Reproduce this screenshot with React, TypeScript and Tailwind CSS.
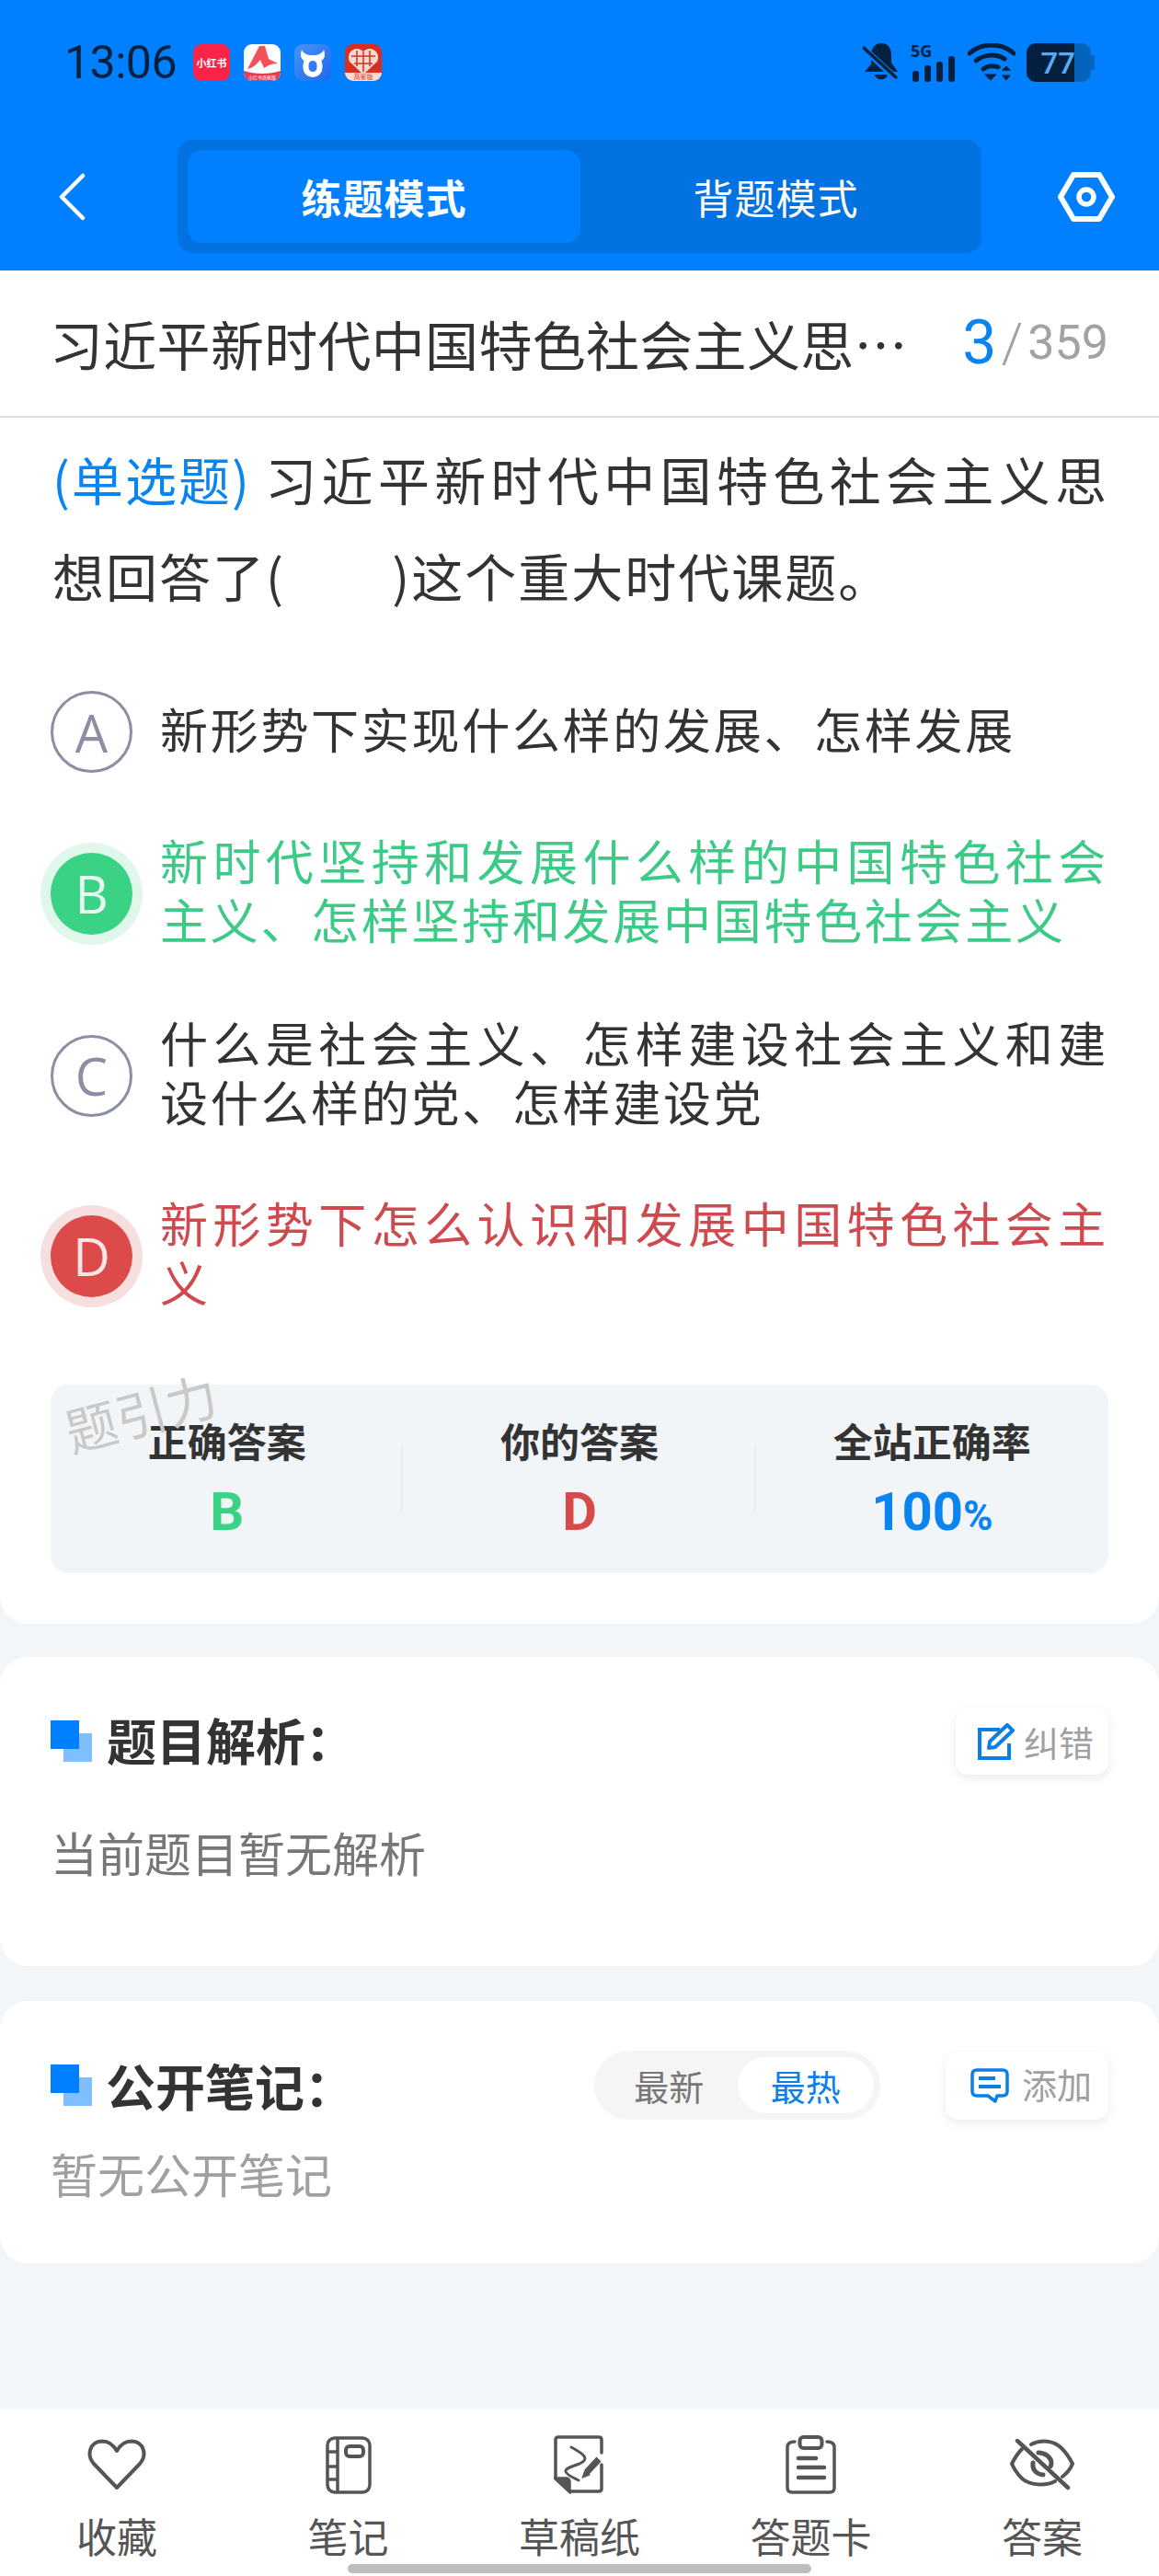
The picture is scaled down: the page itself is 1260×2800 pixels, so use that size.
const cjk = "font-['Noto_Sans_CJK_SC','Noto_Sans',sans-serif]";

function SectionMark() {
  return (
    <div className="relative w-[45px] h-[45px] shrink-0">
      <div className="absolute left-[14px] top-[14px] w-[31px] h-[31px] bg-[#80bfff]" />
      <div className="absolute left-0 top-0 w-[31px] h-[31px] bg-[#0080ff]" />
    </div>
  );
}

function Option(props: { letter: string; text: string; state?: "right" | "wrong" }) {
  let circle = "border-[3px] border-[#8c8fa3] text-[#8c8fa3]";
  let color = "text-[#333333]";
  if (props.state === "right") {
    circle = "bg-[#3ad386] text-[#e6f9ef] shadow-[0_0_0_11px_#e0f7eb]";
    color = "text-[#3ccb86]";
  }
  if (props.state === "wrong") {
    circle = "bg-[#dc4a4a] text-[#fbe6e6] shadow-[0_0_0_11px_#f8dfdf]";
    color = "text-[#cf4a4e]";
  }
  return (
    <div className="flex items-center pl-[55px] pr-[55px]">
      <div
        className={
          "w-[89px] h-[89px] rounded-full shrink-0 flex items-center justify-center text-[56px] font-['Open_Sans',sans-serif] " +
          circle
        }
      >
        {props.letter}
      </div>
      <div className={"ml-[30px] flex-1 pb-[8px] text-[52px] leading-[64px] tracking-[2.7px] text-justify " + color}>{props.text}</div>
    </div>
  );
}

function StatColumn(props: { label: string; children: React.ReactNode; border?: boolean }) {
  return (
    <div className="flex-1 relative flex flex-col items-center pt-[30px]">
      <div className="text-[43px] leading-[60px] font-bold text-[#333333]">{props.label}</div>
      <div className="mt-[13px]">{props.children}</div>
      {props.border && <div className="absolute right-0 top-[65px] w-[2px] h-[75px] bg-[#ebeef1]" />}
    </div>
  );
}

function TabItem(props: { label: string; icon: React.ReactNode }) {
  return (
    <div className="flex flex-col items-center w-[160px]">
      <div className="h-[66px] flex items-center justify-center">{props.icon}</div>
      <div className="mt-[18px] text-[44px] leading-[52px] text-[#555555]">{props.label}</div>
    </div>
  );
}

export default function App() {
  return (
    <div className={"relative w-[1260px] h-[2800px] bg-[#f2f6f9] flex flex-col overflow-hidden " + cjk}>
      {/* blue header */}
      <div className="h-[294px] bg-[#0080ff] shrink-0 flex flex-col">
        <div className="h-[152px] px-[70px] pt-[42px] flex justify-between">
          <div className="flex items-start">
            <span className="w-[122px] text-[50px] leading-[52px] font-['Roboto',sans-serif] text-[#04203f] tracking-[-0.5px]">13:06</span>
            <div className="flex gap-[15px] ml-[18px] mt-[6px]">
              <div className="w-[40px] h-[40px] rounded-[9px] bg-[#fb2448] flex items-center justify-center text-[11px] font-bold text-white whitespace-nowrap">小红书</div>
              <div className="relative w-[40px] h-[40px] rounded-[9px] bg-white overflow-hidden">
                <svg width="40" height="40" viewBox="0 0 40 40">
                  <path d="M17 2 H23 L27 16 L37 21 C30 21 25 24 22 26 L18 17 C14 22 10 26 4 27 Z" fill="#f4515c" />
                  <path d="M0 29 C12 33 28 33 40 29 V40 H0 Z" fill="#e83a50" />
                </svg>
                <span className="absolute left-0 right-0 bottom-[1px] text-center text-[5px] leading-[7px] text-white whitespace-nowrap">小红书商家版</span>
              </div>
              <div className="w-[40px] h-[40px] rounded-[9px] bg-linear-to-br from-[#4a94f5] to-[#1f66ee]">
                <svg width="40" height="40" viewBox="0 0 40 40" fill="none" stroke="white">
                  <path d="M8 6 C10 10 13 12 20 12 C27 12 30 10 32 6 C34 12 33 16 29 18 H11 C7 16 6 12 8 6 Z" fill="white" strokeWidth="0" />
                  <rect x="12.5" y="15" width="15" height="18" rx="7.5" strokeWidth="6" />
                </svg>
              </div>
              <div className="relative w-[40px] h-[40px] rounded-[9px] bg-[#d92e1e] overflow-hidden">
                <svg width="40" height="40" viewBox="0 0 40 40">
                  <path d="M20 33 L5 19 C0 9 12 0 20 8 C28 0 40 9 35 19 Z" fill="#f9d9cf" />
                  <path d="M7 13 H33 M10 21 H30 M20 8 V30 M13 7 V24 M27 7 V24" stroke="#d92e1e" strokeWidth="1.5" />
                </svg>
                <span className="absolute left-0 right-0 bottom-0 h-[9px] bg-[#fbdcd2] text-center text-[7px] leading-[9px] text-[#c9402c]">商家版</span>
              </div>
            </div>
          </div>
          <div className="flex items-start gap-[12px] mt-[5px]">
            <svg width="40" height="41" viewBox="0 0 40 41" fill="#04203f">
              <path d="M20 0 C28 0 31 6 31 13 V21 L38 31 H2 L9 23 V13 C9 6 13 0 20 0 Z" />
              <path d="M13 34 H27 C26 41 14 41 13 34 Z" />
              <path d="M0 5 L37 39" stroke="#0080ff" strokeWidth="7" />
              <path d="M0 4 L37 38" stroke="#04203f" strokeWidth="3.5" />
            </svg>
            <div className="relative w-[50px] h-[42px]">
              <span className="absolute left-0 -top-[3px] text-[18px] leading-[22px] font-bold text-[#04203f] font-['Open_Sans',sans-serif]">5G</span>
              <div className="absolute bottom-0 left-[2px] flex items-end gap-[6px]">
                <div className="w-[7px] h-[12px] rounded-[3px] bg-[#04203f]" />
                <div className="w-[7px] h-[18px] rounded-[3px] bg-[#04203f]" />
                <div className="w-[7px] h-[22px] rounded-[3px] bg-[#04203f]" />
                <div className="w-[7px] h-[28px] rounded-[3px] bg-[#04203f]" />
              </div>
            </div>
            <svg width="52" height="42" viewBox="0 0 52 42" fill="none" stroke="#04203f" strokeLinecap="round" strokeWidth="5">
              <path d="M2 11 C15 -1 37 -1 50 11" />
              <path d="M9 19 C18 12 31 11 40 17" />
              <path d="M17 28 C22 24 29 24 33 26" />
              <path d="M19 34 L31 34 L25 40 Z" fill="#04203f" strokeWidth="1" />
              <path d="M38 29 L42 25 L46 29 Z M38 35 L46 35 L42 40 Z" fill="#04203f" strokeWidth="1" />
            </svg>
            <div className="flex items-center">
              <div className="relative w-[70px] h-[42px] rounded-[10px] bg-[#0463bd]">
                <div className="absolute left-0 top-0 bottom-0 w-[52px] rounded-l-[10px] bg-[#04203f]" />
                <span className="absolute right-[17px] top-0 text-[33px] leading-[42px] font-semibold text-[#5aa9f3] font-['Open_Sans',sans-serif]">77</span>
              </div>
              <div className="w-[4px] h-[16px] rounded-r-[3px] bg-[#0463bd]" />
            </div>
          </div>
        </div>
        <div className="flex items-center pl-[64px] h-[123px]">
          <svg className="shrink-0" width="30" height="52" viewBox="0 0 30 52" fill="none" stroke="white" strokeWidth="4.5" strokeLinecap="round" strokeLinejoin="round">
            <path d="M26 3 L3 26 L26 49" />
          </svg>
          <div className="ml-[99px] w-[874px] h-[123px] shrink-0 rounded-[16px] bg-[#0272e1] p-[11px] flex">
            <div className="w-[427px] h-[101px] rounded-[16px] bg-[#0080ff] flex items-center justify-center text-[44px] font-bold text-white tracking-[1px]">练题模式</div>
            <div className="flex-1 flex items-center justify-center text-[44px] text-white tracking-[1px]">背题模式</div>
          </div>
          <svg className="ml-[83px] shrink-0" width="62" height="54" viewBox="0 0 62 54" fill="none" stroke="white" strokeWidth="6" strokeLinejoin="round">
            <path d="M17 3 H45 L59 27 L45 51 H17 L3 27 Z" />
            <circle cx="31" cy="27" r="8" strokeWidth="5.5" />
          </svg>
        </div>
      </div>

      {/* question card */}
      <div className="bg-white rounded-b-[30px] h-[1471px] shrink-0">
        <div className="h-[160px] border-b-2 border-[#dfdfdf] flex items-center pl-[54px] pr-[55px]">
          <span className="text-[58px] leading-[80px] tracking-[0.3px] text-[#333333] whitespace-nowrap">习近平新时代中国特色社会主义思…</span>
          <span className="ml-auto text-[66px] leading-[80px] text-[#0a84f0] font-['Roboto',sans-serif]">3</span>
          <span className="ml-[5px] text-[60px] leading-[80px] text-[#a2a2a2] font-['Roboto',sans-serif] font-light">/</span>
          <span className="ml-[5px] text-[52px] leading-[80px] text-[#a2a2a2] font-['Roboto',sans-serif]">359</span>
        </div>
        <div className="pl-[57px] pr-[55px] pt-[13px] text-[56px] leading-[105px] tracking-[2px] text-justify text-[#333333]">
          <span className="inline-block mr-[12px] text-[#0a84f0]">(单选题)</span>习近平新时代中国特色社会主义思想回答了(&nbsp;&nbsp;&nbsp;&nbsp;&nbsp;&nbsp;&nbsp;&nbsp;)这个重大时代课题。
        </div>
        <div className="mt-[74px] flex flex-col gap-[60px]">
          <Option letter="A" text="新形势下实现什么样的发展、怎样发展" />
          <div className="mt-[3px]">
            <Option letter="B" text="新时代坚持和发展什么样的中国特色社会主义、怎样坚持和发展中国特色社会主义" state="right" />
          </div>
          <div className="mt-[2px]">
            <Option letter="C" text="什么是社会主义、怎样建设社会主义和建设什么样的党、怎样建设党" />
          </div>
          <Option letter="D" text="新形势下怎么认识和发展中国特色社会主义" state="wrong" />
        </div>
        <div className="relative mt-[72px] mx-[55px] h-[205px] rounded-[20px] bg-[#f1f5f8] flex">
          <StatColumn label="正确答案" border>
            <span className="text-[58px] leading-[70px] font-bold text-[#3ad386] font-['Roboto',sans-serif]">B</span>
          </StatColumn>
          <StatColumn label="你的答案" border>
            <span className="text-[58px] leading-[70px] font-bold text-[#d64a4a] font-['Roboto',sans-serif]">D</span>
          </StatColumn>
          <StatColumn label="全站正确率">
            <span className="text-[58px] leading-[70px] font-bold text-[#0a84f0] font-['Roboto',sans-serif]">
              100<span className="text-[44px]">%</span>
            </span>
          </StatColumn>
          <div className="absolute left-[14px] -top-[6px] -rotate-[15deg] text-[56px] leading-[70px] text-[#c9c9c9]">题引力</div>
        </div>
      </div>

      {/* analysis */}
      <div className="mt-[36px] bg-white rounded-[30px] h-[336px] shrink-0 px-[55px]">
        <div className="flex items-center justify-between pt-[55px]">
          <div className="flex items-center">
            <SectionMark />
            <span className="ml-[16px] -mt-[3px] text-[54px] leading-[70px] font-bold text-[#333333]">题目解析：</span>
          </div>
          <div className="w-[166px] h-[73px] rounded-[14px] bg-white shadow-[0_4px_12px_rgba(0,0,0,0.08)] flex items-center justify-end pr-[16px]">
            <svg width="41" height="40" viewBox="0 0 41 40" fill="none" stroke="#0a7fe8" strokeWidth="4">
              <path d="M24 7 H2 V38 H34 V22" />
              <path d="M12 27 L13 20 L32 2 L38 8 L19 26 Z" strokeLinejoin="round" />
            </svg>
            <span className="ml-[9px] text-[38px] leading-[50px] text-[#a0a0a0]">纠错</span>
          </div>
        </div>
        <div className="mt-[49px] text-[51px] leading-[70px] text-[#777777]">当前题目暂无解析</div>
      </div>

      {/* notes */}
      <div className="mt-[38px] bg-white rounded-[30px] h-[285px] shrink-0 px-[55px]">
        <div className="flex items-center pt-[54px]">
          <SectionMark />
          <span className="ml-[15px] text-[54px] leading-[70px] font-bold text-[#333333]">公开笔记：</span>
          <div className="ml-auto w-[311px] h-[75px] rounded-full bg-[#f5f5f5] flex items-center p-[7px]">
            <span className="w-[150px] text-center text-[38px] text-[#777777]">最新</span>
            <span className="w-[150px] h-[61px] rounded-full bg-white flex items-center justify-center text-[38px] text-[#0a7fe8]">最热</span>
          </div>
          <div className="ml-[71px] w-[177px] h-[74px] rounded-[14px] bg-white shadow-[0_4px_12px_rgba(0,0,0,0.08)] flex items-center justify-end pr-[18px]">
            <svg width="42" height="38" viewBox="0 0 42 38" fill="none" stroke="#0a7fe8" strokeWidth="3.5">
              <path d="M7 2 H35 Q40 2 40 7 V25 Q40 30 35 30 H29 L27 36 L19 30 H7 Q2 30 2 25 V7 Q2 2 7 2 Z" strokeLinejoin="round" />
              <path d="M9 11 H27 M9 20 H33" strokeWidth="4" />
            </svg>
            <span className="ml-[14px] mb-[3px] text-[38px] leading-[50px] text-[#a0a0a0]">添加</span>
          </div>
        </div>
        <div className="mt-[23px] text-[51px] leading-[70px] text-[#a0a0a0]">暂无公开笔记</div>
      </div>

      <div className="flex-1" />

      {/* bottom tabs */}
      <div className="h-[182px] bg-white shrink-0 flex justify-between px-[47px] pt-[28px]">
        <TabItem
          label="收藏"
          icon={
            <svg width="64" height="56" viewBox="0 0 64 56" fill="none" stroke="#555555" strokeWidth="4" strokeLinejoin="round">
              <path d="M32 53 L7 27 C-1 18 2 3 16 2.5 C23 2.5 28 6 32 13 C36 6 41 2.5 48 2.5 C62 3 65 18 57 27 Z" />
            </svg>
          }
        />
        <TabItem
          label="笔记"
          icon={
            <svg width="50" height="63" viewBox="0 0 50 63" fill="none" stroke="#555555" strokeWidth="3.5">
              <rect x="2" y="2" width="46" height="59" rx="8" />
              <path d="M13 2 V61 M2 17 H13 M2 33 H13 M2 47 H13" />
              <rect x="22" y="11" width="19" height="11" rx="4" strokeWidth="4" />
            </svg>
          }
        />
        <TabItem
          label="草稿纸"
          icon={
            <svg width="56" height="64" viewBox="0 0 56 64" fill="none" stroke="#555555" strokeWidth="3.5" strokeLinecap="round">
              <path d="M52 19 V5 Q52 2 49 2 H5 Q2 2 2 5 V47 L17 61 H49 Q52 61 52 58 V32" />
              <path d="M2 47 H13 Q17 47 17 51 V61 Z" fill="#555555" />
              <path d="M19 13 C34 21 39 26 28 31 C14 36 3 38 27 49" strokeWidth="3" />
              <path d="M36 40 L49 26" strokeWidth="7" strokeLinecap="butt" />
              <path d="M31 46 L34 38 L39 43 Z" fill="#555555" strokeWidth="1" />
            </svg>
          }
        />
        <TabItem
          label="答题卡"
          icon={
            <svg width="55" height="64" viewBox="0 0 55 64" fill="none" stroke="#555555" strokeWidth="3.5" strokeLinecap="round">
              <path d="M10 7 Q2 7 2 13 V57 Q2 62 7 62 H48 Q53 62 53 57 V13 Q53 7 45 7" />
              <rect x="15.5" y="2" width="24" height="12" rx="4" strokeWidth="4" />
              <path d="M14 25 H33 M14 35 H42 M14 46 H42" strokeWidth="4.5" />
            </svg>
          }
        />
        <TabItem
          label="答案"
          icon={
            <svg width="70" height="56" viewBox="0 0 70 56" fill="none" stroke="#555555" strokeWidth="4" strokeLinecap="round">
              <path d="M23 6 C34 0 48 2 56 10 C60 14 65 21 68 27 C66 32 61 38 57 41" />
              <path d="M13 11 C9 15 5 21 2 27 C5 34 9 39 13 43 C21 50 38 52 49 46" />
              <path d="M31 15 C38 15 45 20 45 26 C45 27 45 28 44 30" strokeWidth="5" />
              <path d="M25 26 C24 32 27 38 36 39" strokeWidth="5" />
              <path d="M8 2 L63 53" strokeWidth="4.5" />
            </svg>
          }
        />
      </div>

      {/* home indicator */}
      <div className="absolute left-[378px] bottom-[3px] w-[504px] h-[10px] rounded-full bg-[#bdbdbd]" />
    </div>
  );
}
